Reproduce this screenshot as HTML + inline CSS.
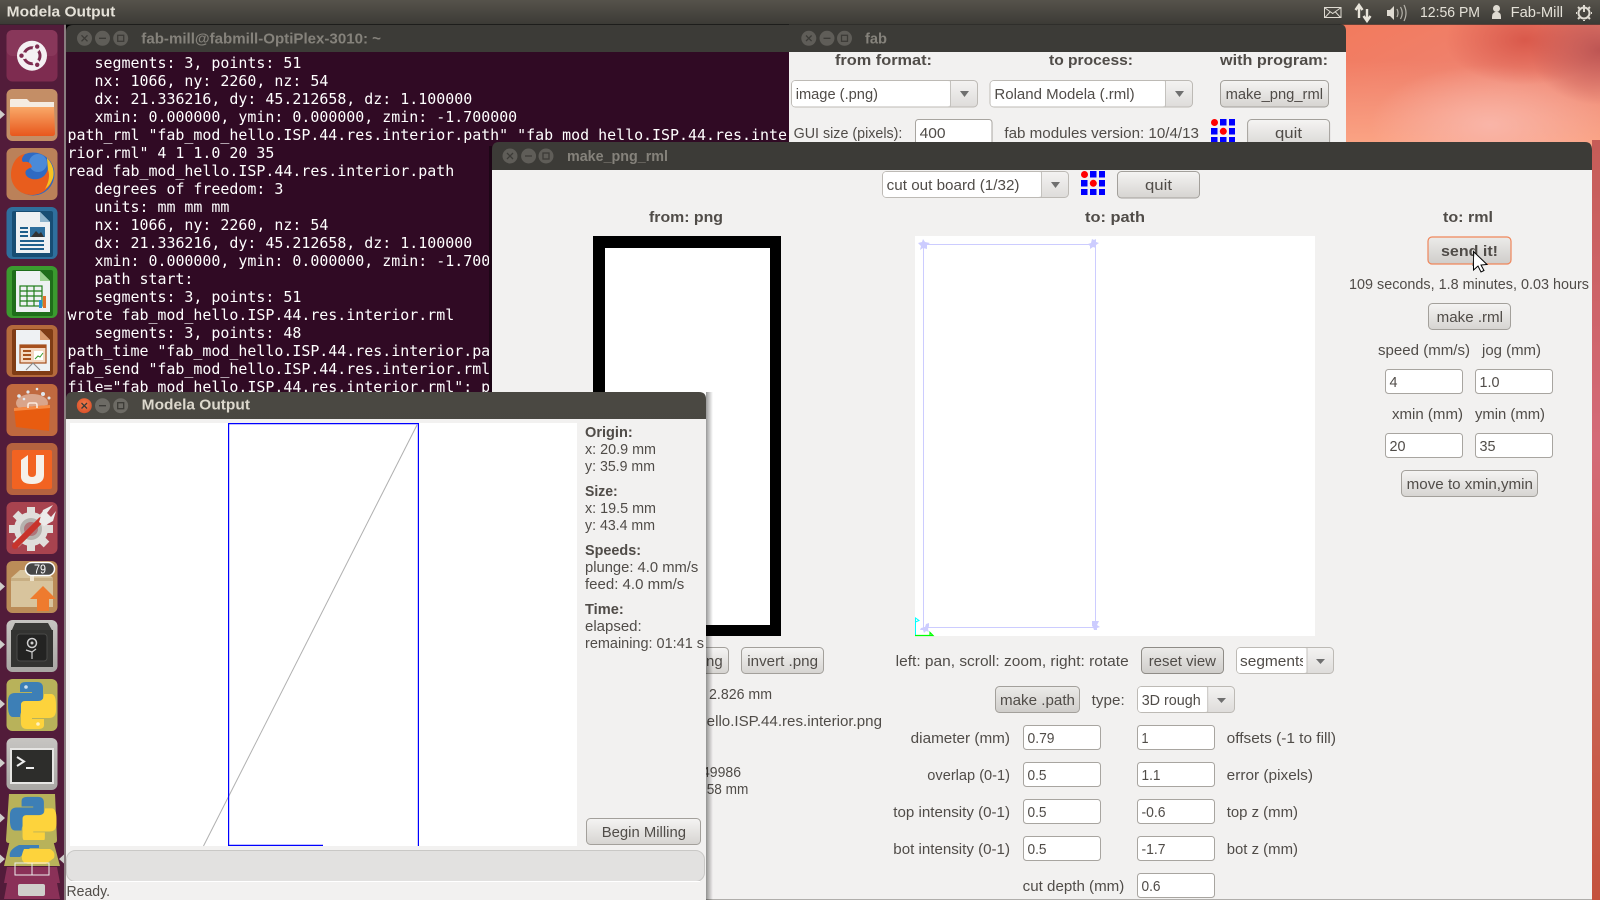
<!DOCTYPE html>
<html><head><meta charset="utf-8"><title>Modela Output</title>
<style>
html,body{margin:0;padding:0;background:#000;width:1600px;height:900px;overflow:hidden}
svg{display:block}
text{font-family:"Liberation Sans",sans-serif;font-size:15px;fill:#504c48;white-space:pre}
.b{font-weight:bold}
.m{font-family:"DejaVu Sans Mono",monospace;font-size:14.95px;fill:#fff}
.tt{font-weight:bold;fill:#85827b}
.btn{fill:url(#bg);stroke:#a3a09b}
.inp{fill:#fff;stroke:#a8a5a0}
.cb{fill:url(#cg);stroke:#bdbab5}
.arr{fill:#6f6f6f}
.body{fill:#f2f1f0}
.p{fill:#e4e1d8;font-size:15px}
</style></head><body>
<svg width="1600" height="900" viewBox="0 0 1600 900" xmlns="http://www.w3.org/2000/svg">
<defs>
<linearGradient id="bg" x1="0" y1="0" x2="0" y2="1"><stop offset="0" stop-color="#f5f4f3"/><stop offset="1" stop-color="#d6d4d1"/></linearGradient>
<linearGradient id="bgd" x1="0" y1="0" x2="0" y2="1"><stop offset="0" stop-color="#ecebe9"/><stop offset="1" stop-color="#cfcdca"/></linearGradient>
<linearGradient id="cg" x1="0" y1="0" x2="0" y2="1"><stop offset="0" stop-color="#f4f3f2"/><stop offset="1" stop-color="#dedcda"/></linearGradient>
<linearGradient id="panel" x1="0" y1="0" x2="0" y2="1"><stop offset="0" stop-color="#56534b"/><stop offset="1" stop-color="#3c3b36"/></linearGradient>
<linearGradient id="tfoc" x1="0" y1="0" x2="0" y2="1"><stop offset="0" stop-color="#4a4842"/><stop offset="1" stop-color="#3c3b37"/></linearGradient>
<linearGradient id="wp" x1="0" y1="0" x2="1" y2="1"><stop offset="0" stop-color="#f37a5c"/><stop offset="0.5" stop-color="#ee8270"/><stop offset="1" stop-color="#e98a80"/></linearGradient>
<linearGradient id="wpl" x1="0" y1="0" x2="0" y2="1"><stop offset="0" stop-color="#fba384" stop-opacity="0"/><stop offset="1" stop-color="#fca685"/></linearGradient>
<radialGradient id="wph" cx="0.5" cy="0.5" r="0.5"><stop offset="0" stop-color="#f9b5a8"/><stop offset="1" stop-color="#f9b5a8" stop-opacity="0"/></radialGradient>
<radialGradient id="wpd" cx="0.5" cy="0.5" r="0.5"><stop offset="0" stop-color="#d9594b"/><stop offset="1" stop-color="#d9594b" stop-opacity="0"/></radialGradient>
<radialGradient id="wpc" cx="0.5" cy="0.5" r="0.5"><stop offset="0" stop-color="#bd5553"/><stop offset="1" stop-color="#bd5553" stop-opacity="0"/></radialGradient>
<linearGradient id="wps" x1="0" y1="0" x2="0" y2="1"><stop offset="0" stop-color="#c65c57"/><stop offset="0.4" stop-color="#d46a78"/><stop offset="0.75" stop-color="#c9604f"/><stop offset="1" stop-color="#c4523d"/></linearGradient>
<linearGradient id="shr" x1="0" y1="0" x2="1" y2="0"><stop offset="0" stop-color="#000" stop-opacity=".4"/><stop offset="1" stop-color="#000" stop-opacity="0"/></linearGradient>
<radialGradient id="clo" cx=".5" cy=".4" r=".6"><stop offset="0" stop-color="#f47c4a"/><stop offset="1" stop-color="#d9512a"/></radialGradient>
<linearGradient id="fold" x1="0" y1="0" x2="0" y2="1"><stop offset="0" stop-color="#f9a868"/><stop offset="1" stop-color="#e8571c"/></linearGradient>
<linearGradient id="gray" x1="0" y1="0" x2="0" y2="1"><stop offset="0" stop-color="#c7c5c2"/><stop offset="1" stop-color="#a9a7a4"/></linearGradient>
<clipPath id="fabclip"><rect x="789" y="24" width="557" height="118"/></clipPath>
<clipPath id="segclip"><rect x="1238" y="647" width="65" height="27"/></clipPath>
<clipPath id="termclip"><rect x="66" y="52" width="723" height="340"/></clipPath>
</defs>

<!-- wallpaper -->
<rect x="1340" y="20" width="260" height="130" fill="url(#wp)"/>
<rect x="1340" y="60" width="260" height="90" fill="url(#wpl)"/>
<ellipse cx="1490" cy="125" rx="120" ry="60" fill="url(#wph)"/>
<ellipse cx="1525" cy="40" rx="80" ry="45" fill="url(#wpd)"/>
<ellipse cx="1600" cy="50" rx="70" ry="55" fill="url(#wpc)"/>
<rect x="1592" y="140" width="8" height="760" fill="url(#wps)"/>

<!-- terminal -->
<path d="M66 900V32Q66 25 73 25H800V900Z" fill="#3c3b37"/>
<rect x="66" y="52" width="726" height="348" fill="#300a24"/>
<g fill="#5f5d58"><circle cx="84.5" cy="38.3" r="7.5"/><circle cx="102.5" cy="38.3" r="7.5"/><circle cx="120.7" cy="38.3" r="7.5"/></g>
<g stroke="#3c3b37" stroke-width="1.3" fill="none"><path d="M81.5 35.3l6 6M87.5 35.3l-6 6M99 38.3h7"/><rect x="117.7" y="35.3" width="6" height="6"/></g>
<text class="tt" x="141.3" y="43.3" textLength="239.7" lengthAdjust="spacingAndGlyphs">fab-mill@fabmill-OptiPlex-3010: ~</text>
<g clip-path="url(#termclip)">
<text class="m" x="94.5" y="68">segments: 3, points: 51</text>
<text class="m" x="94.5" y="86">nx: 1066, ny: 2260, nz: 54</text>
<text class="m" x="94.5" y="104">dx: 21.336216, dy: 45.212658, dz: 1.100000</text>
<text class="m" x="94.5" y="122">xmin: 0.000000, ymin: 0.000000, zmin: -1.700000</text>
<text class="m" x="67.5" y="140">path_rml "fab_mod_hello.ISP.44.res.interior.path" "fab_mod_hello.ISP.44.res.inte</text>
<text class="m" x="67.5" y="158">rior.rml" 4 1 1.0 20 35</text>
<text class="m" x="67.5" y="176">read fab_mod_hello.ISP.44.res.interior.path</text>
<text class="m" x="94.5" y="194">degrees of freedom: 3</text>
<text class="m" x="94.5" y="212">units: mm mm mm</text>
<text class="m" x="94.5" y="230">nx: 1066, ny: 2260, nz: 54</text>
<text class="m" x="94.5" y="248">dx: 21.336216, dy: 45.212658, dz: 1.100000</text>
<text class="m" x="94.5" y="266">xmin: 0.000000, ymin: 0.000000, zmin: -1.700000</text>
<text class="m" x="94.5" y="284">path start:</text>
<text class="m" x="94.5" y="302">segments: 3, points: 51</text>
<text class="m" x="67.5" y="320">wrote fab_mod_hello.ISP.44.res.interior.rml</text>
<text class="m" x="94.5" y="338">segments: 3, points: 48</text>
<text class="m" x="67.5" y="356">path_time "fab_mod_hello.ISP.44.res.interior.path"</text>
<text class="m" x="67.5" y="374">fab_send "fab_mod_hello.ISP.44.res.interior.rml"</text>
<text class="m" x="67.5" y="392">file="fab_mod_hello.ISP.44.res.interior.rml": port</text>
</g>

<!-- fab window -->
<g clip-path="url(#fabclip)">
<path d="M789 150V24H1339Q1346 24 1346 31V150Z" fill="#3c3b37"/>
<rect x="789" y="52" width="557" height="100" class="body"/>
<g fill="#5f5d58"><circle cx="808.8" cy="38.3" r="7.5"/><circle cx="827" cy="38.3" r="7.5"/><circle cx="844.5" cy="38.3" r="7.5"/></g>
<g stroke="#3c3b37" stroke-width="1.3" fill="none"><path d="M806 35.5l5.6 5.6M811.6 35.5l-5.6 5.6M823.5 38.3h7"/><rect x="841.5" y="35.3" width="6" height="6"/></g>
<text class="tt" x="865" y="43.3" textLength="22" lengthAdjust="spacingAndGlyphs">fab</text>
<text class="b" x="835" y="65" textLength="97" lengthAdjust="spacingAndGlyphs">from format:</text>
<text class="b" x="1049" y="65" textLength="84" lengthAdjust="spacingAndGlyphs">to process:</text>
<text class="b" x="1220" y="65" textLength="108" lengthAdjust="spacingAndGlyphs">with program:</text>
<rect x="791.5" y="80.5" width="186" height="26.5" rx="4" class="cb"/><rect x="792" y="81" width="158.5" height="25.5" rx="3" fill="#fff"/><path d="M950.5 81v26" stroke="#c4c2be"/><path class="arr" d="M960 91h9l-4.5 6z"/>
<text x="795.7" y="99" textLength="82.3" lengthAdjust="spacingAndGlyphs">image (.png)</text>
<rect x="990" y="80.5" width="202.5" height="26.5" rx="4" class="cb"/><rect x="990.5" y="81" width="175" height="25.5" rx="3" fill="#fff"/><path d="M1165.5 81v26" stroke="#c4c2be"/><path class="arr" d="M1175 91h9l-4.5 6z"/>
<text x="994.4" y="99" textLength="140.2" lengthAdjust="spacingAndGlyphs">Roland Modela (.rml)</text>
<rect x="1220.5" y="80.5" width="108" height="26.5" rx="4" class="btn"/>
<text x="1225.6" y="99" textLength="97.4" lengthAdjust="spacingAndGlyphs">make_png_rml</text>
<text x="793.6" y="138" textLength="108.8" lengthAdjust="spacingAndGlyphs">GUI size (pixels):</text>
<rect x="915.5" y="119.5" width="76.5" height="30" rx="3" class="inp"/>
<text x="919.6" y="138" textLength="26" lengthAdjust="spacingAndGlyphs">400</text>
<text x="1004.4" y="138" textLength="194.6" lengthAdjust="spacingAndGlyphs">fab modules version: 10/4/13</text>
<g transform="translate(1211,119)"><circle cx="3.5" cy="3.5" r="3.5" fill="#f00"/><g fill="#00f"><rect x="9" width="6.5" height="6.5"/><rect x="18" width="6" height="6.5"/><rect y="9" width="6.5" height="6.5"/><rect x="18" y="9" width="6" height="6.5"/><rect y="18" width="6.5" height="6"/><rect x="9" y="18" width="6.5" height="6"/><rect x="18" y="18" width="6" height="6"/></g><circle cx="12.3" cy="12.3" r="3.5" fill="#f00"/></g>
<rect x="1247.6" y="119.5" width="82" height="30" rx="4" class="btn"/>
<text x="1275" y="138" textLength="27" lengthAdjust="spacingAndGlyphs">quit</text>
</g>

<!-- make_png_rml window -->
<rect x="489" y="146" width="3" height="260" fill="#1d0616"/>
<path d="M492 900V150Q492 142 499 142H1585Q1592 142 1592 150V900Z" fill="#3c3b37"/>
<rect x="492" y="170" width="1100" height="730" class="body"/>
<rect x="492" y="899" width="1100" height="1" fill="#b0aeab"/>
<g fill="#5f5d58"><circle cx="510" cy="156" r="7.5"/><circle cx="528.6" cy="156" r="7.5"/><circle cx="546" cy="156" r="7.5"/></g>
<g stroke="#3c3b37" stroke-width="1.3" fill="none"><path d="M507 153l6 6M513 153l-6 6M525 156h7"/><rect x="543" y="153" width="6" height="6"/></g>
<text class="tt" x="567" y="161" textLength="101" lengthAdjust="spacingAndGlyphs">make_png_rml</text>

<rect x="882.5" y="171.5" width="186" height="26" rx="4" class="cb"/><rect x="883" y="172" width="158.5" height="25" rx="3" fill="#fff"/><path d="M1041.5 172v25" stroke="#c4c2be"/><path class="arr" d="M1051 182h9l-4.5 6z"/>
<text x="886.7" y="190" textLength="132.8" lengthAdjust="spacingAndGlyphs">cut out board (1/32)</text>
<g transform="translate(1081,171)"><circle cx="3.5" cy="3.5" r="3.5" fill="#f00"/><g fill="#00f"><rect x="9" width="6.5" height="6.5"/><rect x="18" width="6" height="6.5"/><rect y="9" width="6.5" height="6.5"/><rect x="18" y="9" width="6" height="6.5"/><rect y="18" width="6.5" height="6"/><rect x="9" y="18" width="6.5" height="6"/><rect x="18" y="18" width="6" height="6"/></g><circle cx="12.3" cy="12.3" r="3.5" fill="#f00"/></g>
<rect x="1117.5" y="171.5" width="82" height="26.5" rx="4" class="btn"/>
<text x="1145" y="190" textLength="27" lengthAdjust="spacingAndGlyphs">quit</text>

<text class="b" x="649" y="222" textLength="74" lengthAdjust="spacingAndGlyphs">from: png</text>
<text class="b" x="1085" y="222" textLength="60" lengthAdjust="spacingAndGlyphs">to: path</text>
<text class="b" x="1443" y="222" textLength="50" lengthAdjust="spacingAndGlyphs">to: rml</text>

<!-- png -->
<rect x="593" y="236" width="188" height="400" fill="#000"/>
<rect x="605" y="248" width="165" height="377" fill="#fff"/>
<!-- path view -->
<rect x="915" y="236" width="400" height="400" fill="#fff"/>
<rect x="923.5" y="244.5" width="172" height="383" fill="none" stroke="#ccf" stroke-width="1"/>
<g fill="#ccf">
<path d="M918 243l4-1 1-3 2 3 5 1-3 2 0 4-4-1-3 2 1-4z"/>
<path d="M1088 244l3-1 1-4 2 1 2-1 0 3 3 1-3 2 0 3-3-1-3 2 0-3z"/>
<path d="M921 628l4-1 1-3 3-1 0 3-1 3 1 3-3-1-2 2-1-3-3 0z"/>
<path d="M1092 621h7l-2 4 3 2-3 1 0 2-3 0-1-3-1-1z"/>
</g>
<path d="M915.5 635V618l3.5 2.5-3.5 1.5" fill="none" stroke="#0ff" stroke-width="1"/>
<path d="M915 635.5H933l-3-3v3" fill="none" stroke="#0f0" stroke-width="1.2"/>

<!-- right column -->
<rect x="1428" y="237" width="83" height="27" rx="4" fill="url(#bgd)" stroke="#f0865a" stroke-width="1.2"/>
<text class="b" x="1441" y="256" textLength="57" lengthAdjust="spacingAndGlyphs">send it!</text>
<text x="1349" y="289" textLength="240" lengthAdjust="spacingAndGlyphs">109 seconds, 1.8 minutes, 0.03 hours</text>
<rect x="1428.5" y="303.5" width="82" height="26" rx="4" class="btn"/>
<text x="1436.7" y="322" textLength="66.3" lengthAdjust="spacingAndGlyphs">make .rml</text>
<text x="1378" y="355" textLength="92" lengthAdjust="spacingAndGlyphs">speed (mm/s)</text>
<text x="1482" y="355" textLength="59" lengthAdjust="spacingAndGlyphs">jog (mm)</text>
<rect x="1385.5" y="369.5" width="77" height="24" rx="3" class="inp"/><text x="1389.5" y="387" textLength="8" lengthAdjust="spacingAndGlyphs">4</text>
<rect x="1475.5" y="369.5" width="77" height="24" rx="3" class="inp"/><text x="1479.5" y="387" textLength="20" lengthAdjust="spacingAndGlyphs">1.0</text>
<text x="1392" y="419" textLength="71" lengthAdjust="spacingAndGlyphs">xmin (mm)</text>
<text x="1475" y="419" textLength="70" lengthAdjust="spacingAndGlyphs">ymin (mm)</text>
<rect x="1385.5" y="433.5" width="77" height="24" rx="3" class="inp"/><text x="1389.5" y="451" textLength="16" lengthAdjust="spacingAndGlyphs">20</text>
<rect x="1475.5" y="433.5" width="77" height="24" rx="3" class="inp"/><text x="1479.5" y="451" textLength="16" lengthAdjust="spacingAndGlyphs">35</text>
<rect x="1401.5" y="470.5" width="136" height="26" rx="4" class="btn"/>
<text x="1406.7" y="489" textLength="126.3" lengthAdjust="spacingAndGlyphs">move to xmin,ymin</text>

<!-- bottom of path column -->
<text x="895.7" y="666" textLength="233" lengthAdjust="spacingAndGlyphs">left: pan, scroll: zoom, right: rotate</text>
<rect x="1141.5" y="647.5" width="82" height="26" rx="4" fill="url(#bgd)" stroke="#8f8c87"/>
<text x="1148.7" y="666" textLength="67.3" lengthAdjust="spacingAndGlyphs">reset view</text>
<rect x="1236.5" y="647.5" width="97" height="26" rx="4" class="cb"/><rect x="1237" y="648" width="70" height="25" rx="3" fill="#fff"/><path d="M1307 648v25" stroke="#c4c2be"/><path class="arr" d="M1316 659h9l-4.5 5z"/>
<text x="1240" y="666" textLength="67" lengthAdjust="spacingAndGlyphs" clip-path="url(#segclip)">segments</text>
<rect x="995.5" y="686.5" width="84" height="26" rx="4" fill="url(#bgd)" stroke="#a3a09b"/>
<text x="1000" y="705" textLength="75" lengthAdjust="spacingAndGlyphs">make .path</text>
<text x="1091.7" y="705" textLength="33" lengthAdjust="spacingAndGlyphs">type:</text>
<rect x="1137.5" y="686.5" width="97" height="26" rx="4" class="cb"/><rect x="1138" y="687" width="70" height="25" rx="3" fill="#fff"/><path d="M1207.7 687v25" stroke="#c4c2be"/><path class="arr" d="M1217 698h9l-4.5 5z"/>
<text x="1141.7" y="705" textLength="59" lengthAdjust="spacingAndGlyphs">3D rough</text>

<text x="910.7" y="743" textLength="99.3" lengthAdjust="spacingAndGlyphs">diameter (mm)</text>
<rect x="1023.5" y="725.5" width="77" height="24" rx="3" class="inp"/><text x="1027.5" y="743" textLength="27" lengthAdjust="spacingAndGlyphs">0.79</text>
<rect x="1137.5" y="725.5" width="77" height="24" rx="3" class="inp"/><text x="1141.5" y="743" textLength="7" lengthAdjust="spacingAndGlyphs">1</text>
<text x="1226.7" y="743" textLength="109.3" lengthAdjust="spacingAndGlyphs">offsets (-1 to fill)</text>

<text x="927.3" y="780" textLength="82.7" lengthAdjust="spacingAndGlyphs">overlap (0-1)</text>
<rect x="1023.5" y="762.5" width="77" height="24" rx="3" class="inp"/><text x="1027.5" y="780" textLength="19" lengthAdjust="spacingAndGlyphs">0.5</text>
<rect x="1137.5" y="762.5" width="77" height="24" rx="3" class="inp"/><text x="1141.5" y="780" textLength="19" lengthAdjust="spacingAndGlyphs">1.1</text>
<text x="1226.7" y="780" textLength="86.3" lengthAdjust="spacingAndGlyphs">error (pixels)</text>

<text x="893.3" y="817" textLength="116.7" lengthAdjust="spacingAndGlyphs">top intensity (0-1)</text>
<rect x="1023.5" y="799.5" width="77" height="24" rx="3" class="inp"/><text x="1027.5" y="817" textLength="19" lengthAdjust="spacingAndGlyphs">0.5</text>
<rect x="1137.5" y="799.5" width="77" height="24" rx="3" class="inp"/><text x="1141.5" y="817" textLength="24" lengthAdjust="spacingAndGlyphs">-0.6</text>
<text x="1226.7" y="817" textLength="71.3" lengthAdjust="spacingAndGlyphs">top z (mm)</text>

<text x="893.3" y="854" textLength="116.7" lengthAdjust="spacingAndGlyphs">bot intensity (0-1)</text>
<rect x="1023.5" y="836.5" width="77" height="24" rx="3" class="inp"/><text x="1027.5" y="854" textLength="19" lengthAdjust="spacingAndGlyphs">0.5</text>
<rect x="1137.5" y="836.5" width="77" height="24" rx="3" class="inp"/><text x="1141.5" y="854" textLength="24" lengthAdjust="spacingAndGlyphs">-1.7</text>
<text x="1226.7" y="854" textLength="71.3" lengthAdjust="spacingAndGlyphs">bot z (mm)</text>

<text x="1022.7" y="891" textLength="101.6" lengthAdjust="spacingAndGlyphs">cut depth (mm)</text>
<rect x="1137.5" y="873.5" width="77" height="24" rx="3" class="inp"/><text x="1141.5" y="891" textLength="19" lengthAdjust="spacingAndGlyphs">0.6</text>

<!-- hidden left parts -->
<rect x="640" y="647.5" width="88.5" height="26" rx="4" class="btn"/>
<text x="706" y="666" textLength="16.7" lengthAdjust="spacingAndGlyphs">ng</text>
<rect x="741.5" y="647.5" width="82" height="26" rx="4" class="btn"/>
<text x="747.3" y="666" textLength="70.7" lengthAdjust="spacingAndGlyphs">invert .png</text>
<text x="709" y="699" textLength="63" lengthAdjust="spacingAndGlyphs">2.826 mm</text>
<text x="706.7" y="726" textLength="175.3" lengthAdjust="spacingAndGlyphs">ello.ISP.44.res.interior.png</text>
<text x="702" y="777" textLength="39" lengthAdjust="spacingAndGlyphs">49986</text>
<text x="706.7" y="794" textLength="41.6" lengthAdjust="spacingAndGlyphs">58 mm</text>

<!-- Modela Output window -->
<rect x="706" y="392" width="7" height="508" fill="url(#shr)"/>
<path d="M66 900V399Q66 392 73 392H699Q706 392 706 399V900Z" fill="url(#tfoc)"/>
<rect x="66" y="419" width="640" height="481" class="body"/>
<rect x="70" y="423" width="507" height="423" fill="#fff"/>
<path d="M203.5 846L417 425" stroke="#b0b0b0" stroke-width="1" fill="none"/>
<path d="M323 845.4H228.6V423.6H418.4V846" fill="none" stroke="#00f" stroke-width="1.2"/>
<circle cx="84.3" cy="405.7" r="7.5" fill="url(#clo)"/><circle cx="102.5" cy="405.7" r="7.5" fill="#6d6b65"/><circle cx="120.7" cy="405.7" r="7.5" fill="#6d6b65"/>
<g stroke="#3c3b37" stroke-width="1.3" fill="none"><path d="M81.5 403l5.500 5.500M87 403l-5.500 5.500M99 405.7h7"/><rect x="117.7" y="402.7" width="6" height="6"/></g>
<text class="b" style="fill:#dcd8cd" x="141.7" y="409.5" textLength="108.3" lengthAdjust="spacingAndGlyphs">Modela Output</text>

<text class="b" x="585" y="437" textLength="47.7" lengthAdjust="spacingAndGlyphs">Origin:</text>
<text x="585" y="454" textLength="71" lengthAdjust="spacingAndGlyphs">x: 20.9 mm</text>
<text x="585" y="471" textLength="70" lengthAdjust="spacingAndGlyphs">y: 35.9 mm</text>
<text class="b" x="585" y="496" textLength="32.7" lengthAdjust="spacingAndGlyphs">Size:</text>
<text x="585" y="513" textLength="71" lengthAdjust="spacingAndGlyphs">x: 19.5 mm</text>
<text x="585" y="530" textLength="70" lengthAdjust="spacingAndGlyphs">y: 43.4 mm</text>
<text class="b" x="585" y="555" textLength="56" lengthAdjust="spacingAndGlyphs">Speeds:</text>
<text x="585" y="572" textLength="113.3" lengthAdjust="spacingAndGlyphs">plunge: 4.0 mm/s</text>
<text x="585" y="589" textLength="99.3" lengthAdjust="spacingAndGlyphs">feed: 4.0 mm/s</text>
<text class="b" x="585" y="614" textLength="38.7" lengthAdjust="spacingAndGlyphs">Time:</text>
<text x="585" y="631" textLength="56.7" lengthAdjust="spacingAndGlyphs">elapsed:</text>
<text x="585" y="648" textLength="119" lengthAdjust="spacingAndGlyphs">remaining: 01:41 s</text>
<rect x="586.5" y="818.5" width="114" height="26" rx="4" class="btn"/>
<text x="601.7" y="837" textLength="84.3" lengthAdjust="spacingAndGlyphs">Begin Milling</text>
<rect x="66.5" y="850.5" width="638" height="31" rx="9" fill="#e2e1e0" stroke="#c9c8c6"/>
<path d="M70 881.5H700" stroke="#fff"/>
<text x="66.5" y="896" textLength="43.5" lengthAdjust="spacingAndGlyphs">Ready.</text>

<!-- launcher -->
<rect x="0" y="24" width="65" height="876" fill="#521c3a"/>
<rect x="64" y="24" width="2" height="876" fill="#8a7d80"/>
<g fill="#cfcdca">
<path d="M0 110v9l5-4.500z"/><path d="M0 582v9l5-4.500z"/><path d="M0 640v9l5-4.500z"/><path d="M0 699.5v9l5-4.500z"/><path d="M0 758.5v9l5-4.500z"/><path d="M0 813.5v9l5-4.500z"/><path d="M0 854.5v9l5-4.500z"/><path d="M64 854.5v9l-5-4.500z"/>
</g>

<!-- dash -->
<g transform="translate(6,30)"><rect x=".5" width="51" height="51.5" rx="6" fill="#7e2c50"/><rect x=".5" width="51" height="26" rx="6" fill="#8f3f60" opacity=".6"/>
<circle cx="26" cy="25.7" r="15" fill="#f4f0f2"/><circle cx="26" cy="25.7" r="8" fill="none" stroke="#7e2c50" stroke-width="3"/>
<g fill="#f4f0f2"><circle cx="18" cy="25.7" r="3.4"/><circle cx="30" cy="18.8" r="3.4"/><circle cx="30" cy="32.6" r="3.4"/></g>
<g fill="#7e2c50"><circle cx="15.5" cy="25.7" r="2.2"/><circle cx="31.2" cy="16.6" r="2.2"/><circle cx="31.2" cy="34.8" r="2.2"/></g></g>
<!-- files -->
<g transform="translate(6,89)"><rect x=".5" width="51" height="52" rx="6" fill="#c48e66"/><path d="M4 14V11Q4 10 5 10H21l3 3H48V20H4Z" fill="#f5ece2"/><path d="M4 18H48L49 44Q49 47 46 47H7Q4 47 4 44Z" fill="url(#fold)"/></g>
<!-- firefox -->
<g transform="translate(6,148)"><rect x=".5" width="51" height="52" rx="6" fill="#bb8159"/><circle cx="27" cy="26" r="21.5" fill="#2f6ac2"/><circle cx="32" cy="15" r="9" fill="#4a8ad8"/>
<path d="M5 27C5 16 11 7 19 6C16 9 15 12 17 14C22 13 25 15 26 19C22 21 18 22 20 27C23 32 32 33 38 28C42 24 44 17 41 10C46 15 48 22 47 29C45 40 36 47 26 47C14 47 5 38 5 27Z" fill="#e85d1d"/>
<path d="M41 10C46 15 49 23 47 30C45 35 43 38 39 41C43 34 44 27 42 22Z" fill="#f5c224"/></g>
<!-- writer -->
<g transform="translate(6,207)"><rect x=".5" width="51" height="52" rx="6" fill="#2f6f9d"/><rect x="6" y="4" width="41" height="46" rx="2" fill="#174d73"/><path d="M10 5H34L44 15V46H10Z" fill="#eef1f3"/><path d="M34 5V15H44Z" fill="#8fb4cc"/><rect x="24" y="20" width="15" height="10" fill="#2f6f9d"/><path d="M25 30l5-6 3 3 2-2 3 5z" fill="#333"/><g fill="#1e5f8c"><rect x="14" y="20" width="8" height="2"/><rect x="14" y="24" width="8" height="2"/><rect x="14" y="28" width="8" height="2"/><rect x="14" y="33" width="24" height="2"/><rect x="14" y="37" width="24" height="2"/><rect x="14" y="41" width="24" height="2"/></g></g>
<!-- calc -->
<g transform="translate(6,266)"><rect x=".5" width="51" height="52" rx="6" fill="#3b9a2f"/><rect x="6" y="4" width="41" height="46" rx="2" fill="#1f6d1a"/><path d="M10 5H34L44 15V46H10Z" fill="#eef1f3"/><path d="M34 5V15H44Z" fill="#9bd08f"/><g fill="none" stroke="#1f7d1a" stroke-width="1.2"><rect x="14" y="20" width="22" height="20"/><path d="M14 25h22M14 30h22M14 35h22M21 20v20M28 20v20"/></g><rect x="33" y="34" width="3" height="8" fill="#2a8fd0"/><rect x="37" y="30" width="3" height="12" fill="#e0702a"/></g>
<!-- impress -->
<g transform="translate(6,325)"><rect x=".5" width="51" height="52" rx="6" fill="#b46a3c"/><rect x="6" y="4" width="41" height="46" rx="2" fill="#7f3c15"/><path d="M10 5H34L44 15V46H10Z" fill="#eef1f3"/><path d="M34 5V15H44Z" fill="#d99b6f"/><rect x="14" y="20" width="26" height="18" fill="#f4d9c3" stroke="#a6501d" stroke-width="1.2"/><rect x="14" y="20" width="26" height="3" fill="#a6501d"/><g fill="#a6501d"><rect x="17" y="25" width="8" height="2"/><rect x="17" y="29" width="8" height="2"/><rect x="17" y="33" width="8" height="2"/></g><rect x="28" y="26" width="9" height="9" fill="#fff"/><path d="M29 34l3-3 2 1 3-4" stroke="#3a9a2f" fill="none"/><path d="M20 45l7-7 7 7" stroke="#888" fill="none"/></g>
<!-- software center -->
<g transform="translate(6,384)"><rect x=".5" width="51" height="52" rx="6" fill="#c0693f"/><ellipse cx="26" cy="19" rx="16" ry="9" fill="#fff" opacity=".4"/><path d="M8 24L44 21L43 47L10 43Z" fill="#e85c10"/><path d="M8 24L44 21V24L8 27Z" fill="#f58a45"/><path d="M22 24v-3q0-2 2-2h5q2 0 2 2v3" fill="none" stroke="#fbe9dc" stroke-width="1.6"/><g fill="#dfe8ef"><circle cx="13" cy="12" r="1.8"/><circle cx="22" cy="8" r="1.6"/><circle cx="31" cy="5" r="1.3"/><circle cx="37" cy="10" r="2"/><circle cx="43" cy="14" r="1.5"/><circle cx="18" cy="15" r="1.3"/></g></g>
<!-- ubuntu one -->
<g transform="translate(6,443)"><rect x=".5" width="51" height="52" rx="6" fill="#b5623f"/><rect x="6" y="7" width="40" height="39" rx="2" fill="#f26322"/><path d="M15 17h7v13q0 4 4 4t4-4V12h8v20q0 9-12 9T15 32Z" fill="#f5f0ea"/><path d="M15 17l7-5v5z" fill="#f5f0ea"/></g>
<!-- settings -->
<g transform="translate(6,502)"><rect x=".5" width="51" height="52" rx="6" fill="#a8434f"/><g stroke="#e0dedb" stroke-width="8"><path d="M25 5v44M3 27h44M9.500 11.500l31 31M40.500 11.500l-31 31"/></g><circle cx="25" cy="27" r="17" fill="#e0dedb"/><circle cx="25" cy="27" r="11" fill="#b5b2ae"/><circle cx="25" cy="27" r="7" fill="#a8434f" opacity=".55"/><path d="M9 44L35 18" stroke="#c8342c" stroke-width="6" stroke-linecap="round"/><path d="M33 20L37 8L47 3L41 11L45 15L50 9L47 19L38 24Z" fill="#ecebea"/></g>
<!-- update -->
<g transform="translate(6,561)"><rect x=".5" width="51" height="52" rx="6" fill="#bb8c58"/><path d="M5 17L14 9H38L47 17V46H5Z" fill="#d8c49d"/><path d="M5 17H47V20H5Z" fill="#c7ae83"/><rect x="24" y="9" width="4" height="11" fill="#efe4cd"/><path d="M37 25L50 38H43V50H31V38H24Z" fill="#ee7b2e"/><rect x="19.5" y="1.5" width="29" height="13" rx="6.5" fill="#464646" stroke="#fff" stroke-width="1.5"/><text x="28" y="12.5" style="fill:#fff;font-size:13px" textLength="12" lengthAdjust="spacingAndGlyphs">79</text></g>
<!-- camera -->
<g transform="translate(6,620)"><rect x=".5" width="51" height="52" rx="6" fill="url(#gray)"/><path d="M5 12L9 3H42L47 12V47H5Z" fill="#3a3a38"/><path d="M5 10H47V47H5Z" fill="#333331"/><rect x="11" y="14" width="30" height="27" rx="3" fill="#232322" stroke="#4a4a48"/><circle cx="26" cy="23" r="4.5" fill="none" stroke="#cfcfcf" stroke-width="1.5"/><circle cx="26" cy="23" r="1.5" fill="#cfcfcf"/><path d="M26 32v7M26 32l-6-2M26 32l4-3" stroke="#cfcfcf" stroke-width="1.2"/></g>
<!-- python -->
<g transform="translate(6,679)"><rect x=".5" width="51" height="52" rx="6" fill="#b8b25a"/><path d="M14 13V7Q14 3 20 3H31Q37 3 37 9V27Q37 31 33 31H20Q14 31 14 38H7Q2 38 2 27V22Q2 14 9 14H26V13Z" fill="#3d7fb6"/><path d="M14 13V7Q14 3 20 3H31Q37 3 37 9V27Q37 31 33 31H20Q14 31 14 38H7Q2 38 2 27V22Q2 14 9 14H26V13Z" fill="#fdd33c" transform="rotate(180 26 26.5)"/><circle cx="20" cy="8" r="1.8" fill="#cfe0ee"/><circle cx="32" cy="45" r="1.8" fill="#fff2c0"/></g>
<!-- terminal -->
<g transform="translate(6,738)"><rect x=".5" width="51" height="52" rx="6" fill="url(#gray)"/><rect x="4" y="10" width="44" height="36" fill="#e6e5e3"/><rect x="6" y="12" width="40" height="32" fill="#2d2d2b"/><path d="M11 19l7 4.5-7 4.500" fill="none" stroke="#eee" stroke-width="2"/><path d="M20 30h8" stroke="#eee" stroke-width="2"/></g>
<!-- python 2 -->
<g transform="translate(7,794)"><path d="M2 0H48L50 46Q50 49 47 49H2Q-1 49 -1 46Z" fill="#b8b25a"/><g transform="translate(1,0) scale(.97,.96)"><path d="M14 13V7Q14 3 20 3H31Q37 3 37 9V27Q37 31 33 31H20Q14 31 14 38H7Q2 38 2 27V22Q2 14 9 14H26V13Z" fill="#3d7fb6"/><path d="M14 13V7Q14 3 20 3H31Q37 3 37 9V27Q37 31 33 31H20Q14 31 14 38H7Q2 38 2 27V22Q2 14 9 14H26V13Z" fill="#fdd33c" transform="rotate(180 26 26.5)"/></g></g>
<!-- compressed -->
<path d="M10 840H53L60 866H4Z" fill="#b8b25a"/>
<path d="M19 845H39V848H30L20 857H10Q8 850 19 845Z" fill="#3d7fb6"/>
<path d="M24 849H50Q56 852 54 858L46 864H28Q18 862 24 849Z" fill="#fdd33c"/>
<path d="M7 867H57L60 883H4Z" fill="#8a3158"/>
<path d="M15 863H49V875H15ZM32 863V875" fill="none" stroke="#eee" stroke-width="1"/>
<path d="M7 883H57L60 899H4Z" fill="#8a3158"/>
<rect x="18" y="884" width="27" height="12" rx="2" fill="#cfcfcb"/>

<!-- panel -->
<rect x="0" y="0" width="1600" height="24" fill="url(#panel)"/>
<rect x="0" y="24" width="1600" height="1" fill="#2a2926" opacity=".7"/>
<text class="b p" x="6.7" y="16.7" textLength="108.6" lengthAdjust="spacingAndGlyphs">Modela Output</text>
<rect x="1324.5" y="7.5" width="16.5" height="10" fill="none" stroke="#dfdbd2"/><path d="M1325 8l7.700 5.500L1340.500 8M1325 17.500l5.500-6M1340.500 17.500l-5.500-6" stroke="#dfdbd2" fill="none"/>
<path d="M1359 18V7M1355.500 10l3.500-5 3.500 5M1367 9v11M1363.500 16l3.500 5 3.500-5" stroke="#e8e4da" stroke-width="2.4" fill="none"/>
<path d="M1387 10h3l4-4v14l-4-4h-3z" fill="#dfdbd2"/><path d="M1397 9q2 4 0 8M1400.500 7q3.500 6 0 12M1404 5q4 8 0 16" fill="none" stroke="#b5b2aa" stroke-width="1.2"/>
<text class="p" x="1420" y="17" textLength="60" lengthAdjust="spacingAndGlyphs">12:56 PM</text>
<circle cx="1496.5" cy="8.5" r="3.5" fill="#dfdbd2"/><path d="M1492 19v-2q0-4 3-5h3q3 1 3 5v2z" fill="#dfdbd2"/>
<text class="p" x="1510.6" y="17" textLength="52.4" lengthAdjust="spacingAndGlyphs">Fab-Mill</text>
<circle cx="1584" cy="13" r="5.5" fill="none" stroke="#dfdbd2" stroke-width="2"/><path d="M1584 5v7M1584 6v-1M1578 7l1.500 1.500M1590 7l-1.500 1.500M1577 13h-1M1592 13h-1M1578 19l1.500-1.500M1590 19l-1.500-1.500M1584 20v1" stroke="#dfdbd2" stroke-width="2"/>

<!-- cursor -->
<path d="M1473.5 251.500V270l4.500-4 3 6 3-1.500-3-5.500 6-.5z" fill="#fff" stroke="#000" stroke-width="1"/>
<path d="M1474 252l-1 14" stroke="#222" stroke-width=".8"/>
</svg>
</body></html>
